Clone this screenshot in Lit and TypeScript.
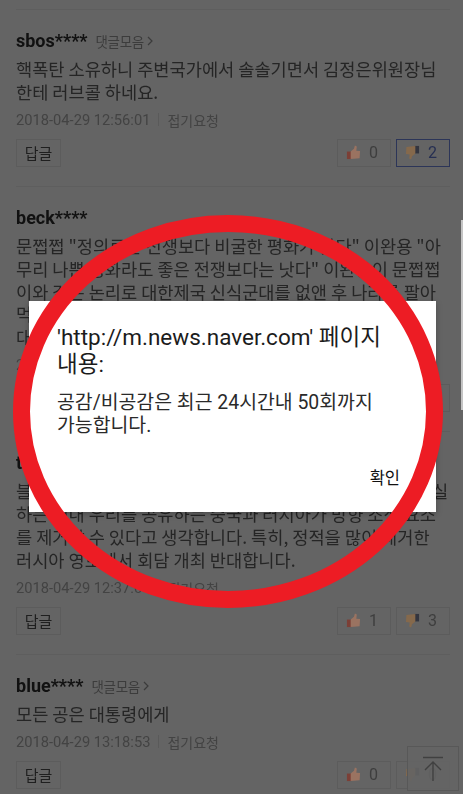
import { LitElement, html, css, svg } from "lit";
import { customElement } from "lit/decorators.js";

interface Comment {
  user: string;
  more: boolean;
  lines: string[];
  date: string;
  up: number;
  down: number;
  picked?: boolean;
}

const COMMENTS: Comment[] = [
  {
    user: "sbos****",
    more: true,
    lines: ["핵폭탄 소유하니 주변국가에서 솔솔기면서 김정은위원장님", "한테 러브콜 하네요."],
    date: "2018-04-29 12:56:01",
    up: 0,
    down: 2,
    picked: true,
  },
  {
    user: "beck****",
    more: false,
    lines: [
      "문쩝쩝 \"정의로운 전쟁보다 비굴한 평화가 낫다\" 이완용 \"아",
      "무리 나쁜 평화라도 좋은 전쟁보다는 낫다\" 이완용이 문쩝쩝",
      "이와 같은 논리로 대한제국 신식군대를 없앤 후 나라를 팔아",
      "먹었습니다 우리는 역사를 잊어서는 안되며 끝까지 지켜야",
      "대한민국 국민 여러분 생각해 보십시오",
    ],
    date: "2018-04-29 12:41:17",
    up: 0,
    down: 0,
  },
  {
    user: "thre****",
    more: false,
    lines: [
      "블라디보스톡에서 회담 개최는 절대 안됩니다 미국이 핵을 실",
      "하는 내내 우리를 공유하는 중국과 러시아가 방향 조정 요소",
      "를 제거할 수 있다고 생각합니다. 특히, 정적을 많이 제거한",
      "러시아 영토에서 회담 개최 반대합니다.",
    ],
    date: "2018-04-29 12:37:04",
    up: 1,
    down: 3,
  },
  {
    user: "blue****",
    more: true,
    lines: ["모든 공은 대통령에게"],
    date: "2018-04-29 13:18:53",
    up: 0,
    down: 0,
  },
];

const thumb = (down: boolean) => svg`
  <svg class="thumb" viewBox="0 0 16 16" width="15" height="15" aria-hidden="true">
    <g transform=${down ? "rotate(180 8 8)" : ""}>
      <rect x="1" y="7" width="5" height="8" fill=${down ? "#33353f" : "#7c3f36"}></rect>
      <path d="M5 7 L8.5 4 L9.5 0.5 L11.5 1.5 L11 6 L15 6.5 L14.5 14 L5 15 Z" fill=${down ? "#85694c" : "#9a7361"}></path>
    </g>
  </svg>`;

@customElement("app-comment")
class AppComment extends LitElement {
  static properties = { data: { attribute: false } };
  data!: Comment;

  static styles = css`
    :host {
      display: block;
      padding: 18px 0 19.4px;
      border-top: 1px solid #5e5e5e;
    }
    .head {
      display: flex;
      align-items: center;
      gap: 8px;
      height: 26px;
    }
    .user {
      font: 700 18px/26px Roboto, "Noto Sans CJK KR", sans-serif;
      color: #111;
    }
    .more {
      font: 400 13.5px/26px "Noto Sans CJK KR", sans-serif;
      color: #3c3c3c;
      letter-spacing: -0.3px;
      display: flex;
      align-items: center;
      gap: 3px;
    }
    .chev {
      display: block;
    }
    .body {
      margin-top: 4px;
      font: 400 17.6px/22.8px "Noto Sans CJK KR", sans-serif;
      color: #252525;
      white-space: nowrap;
    }
    .meta {
      display: flex;
      align-items: center;
      margin-top: 5px;
      height: 22px;
      font: 400 14px/22px "Noto Sans CJK KR", sans-serif;
      color: #434343;
    }
    .date {
      font: 400 14.7px/22px Roboto, sans-serif;
    }
    .sep {
      width: 1px;
      height: 13px;
      background: #5a5a5a;
      margin: 0 8px;
    }
    .acts {
      display: flex;
      justify-content: space-between;
      margin-top: 8px;
    }
    .votes {
      display: flex;
      gap: 5px;
    }
    .btn {
      box-sizing: border-box;
      height: 28px;
      border: 1px solid #5c5c5c;
      display: flex;
      align-items: center;
      font: 400 15px/1 "Noto Sans CJK KR", Roboto, sans-serif;
      color: #1f1f1f;
    }
    .reply {
      width: 45px;
      justify-content: center;
    }
    .vote {
      width: 54px;
      gap: 8px;
      padding-left: 8px;
      color: #3e3e3e;
      font: 400 16px/1 Roboto, sans-serif;
    }
    .vote.picked {
      border-color: #2c3558;
      color: #262f52;
    }
    .thumb {
      display: block;
    }
  `;

  render() {
    const c = this.data;
    return html`
      <div class="head">
        <span class="user">${c.user}</span>
        ${c.more
          ? html`<span class="more">댓글모음
              <svg class="chev" width="6" height="10" viewBox="0 0 6 10">
                <path d="M1 1 L5 5 L1 9" fill="none" stroke="#3c3c3c" stroke-width="1.2"></path>
              </svg></span>`
          : ""}
      </div>
      <div class="body">${c.lines.map((l) => html`<div>${l}</div>`)}</div>
      <div class="meta"><span class="date">${c.date}</span><span class="sep"></span>접기요청</div>
      <div class="acts">
        <div class="btn reply">답글</div>
        <div class="votes">
          <div class="btn vote">${thumb(false)}<span>${c.up}</span></div>
          <div class="btn vote ${c.picked ? "picked" : ""}">${thumb(true)}<span>${c.down}</span></div>
        </div>
      </div>
    `;
  }
}

@customElement("app-root")
class AppRoot extends LitElement {
  static styles = css`
    :host {
      display: block;
      position: relative;
      width: 463px;
      height: 794px;
      overflow: hidden;
      background: #646464;
    }
    .list {
      padding: 9px 13px 0 16px;
      filter: blur(0.35px);
    }
    .scroll {
      position: absolute;
      right: 0;
      top: 220px;
      width: 2px;
      height: 190px;
      background: #c4c4c4;
    }
    .top {
      position: absolute;
      left: 407px;
      top: 746px;
      width: 52px;
      height: 45px;
      box-sizing: border-box;
      border: 1px solid #585858;
      background: rgba(100, 100, 100, 0.9);
      display: flex;
      align-items: center;
      justify-content: center;
    }
    .dialog {
      position: absolute;
      left: 29px;
      top: 301px;
      width: 407px;
      height: 211px;
      box-sizing: border-box;
      background: #fff;
      padding: 23px 20px 0 28px;
      color: #222;
      display: flex;
      flex-direction: column;
      box-shadow: 0 2px 6px rgba(0, 0, 0, 0.25);
    }
    .title {
      font: 400 22.5px/26.5px Roboto, "Noto Sans CJK KR", sans-serif;
      color: #1c1c1c;
      white-space: nowrap;
    }
    .msg {
      margin-top: 13.5px;
      font: 400 19.4px/23px Roboto, "Noto Sans CJK KR", sans-serif;
      color: #2a2a2a;
      white-space: nowrap;
    }
    .ok {
      position: absolute;
      right: 36px;
      top: 164px;
      font: 400 16.5px/24px "Noto Sans CJK KR", sans-serif;
      color: #111;
    }
    .ring {
      position: absolute;
      left: 0;
      top: 0;
      pointer-events: none;
    }
  `;

  render() {
    return html`
      <div class="list">
        ${COMMENTS.map((c) => html`<app-comment .data=${c}></app-comment>`)}
      </div>
      <div class="scroll"></div>
      <div class="top">
        <svg width="24" height="26" viewBox="0 0 24 26">
          <path d="M2 1.5 H22 M12 25 V6 M4 14 L12 6 L20 14" fill="none" stroke="#404040" stroke-width="1.4"></path>
        </svg>
      </div>
      <div class="dialog">
        <div class="title">'http://m.news.naver.com' 페이지<br />내용:</div>
        <div class="msg">공감/비공감은 최근 24시간내 50회까지<br />가능합니다.</div>
        <div class="ok">확인</div>
      </div>
      <svg class="ring" width="463" height="794" viewBox="0 0 463 794">
        <ellipse cx="228" cy="411.5" rx="206.5" ry="188" fill="none" stroke="#ed1c24" stroke-width="17"></ellipse>
      </svg>
    `;
  }
}
